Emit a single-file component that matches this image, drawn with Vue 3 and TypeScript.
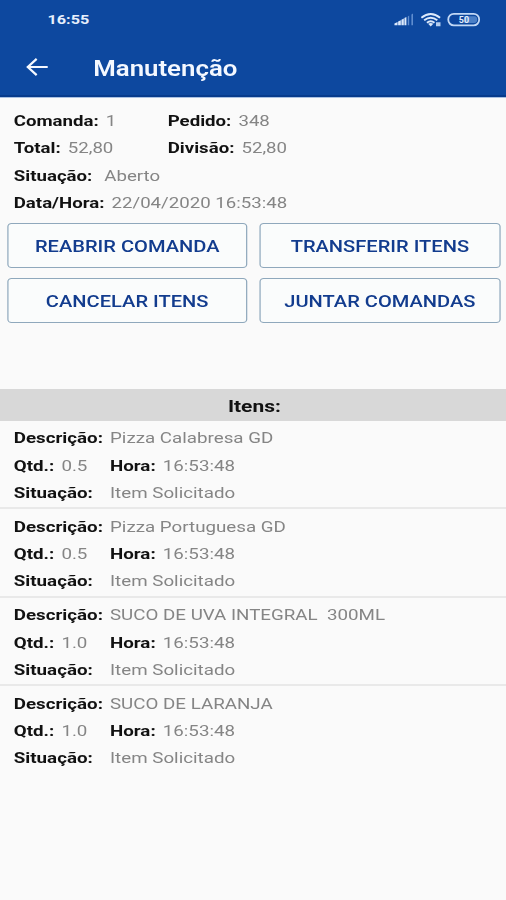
<script setup lang="ts">
interface Item {
  description: string
  quantity: string
  time: string
  status: string
}

const actions: string[] = ['REABRIR COMANDA', 'TRANSFERIR ITENS', 'CANCELAR ITENS', 'JUNTAR COMANDAS']

const items: Item[] = [
  { description: 'Pizza Calabresa GD', quantity: '0.5', time: '16:53:48', status: 'Item Solicitado' },
  { description: 'Pizza Portuguesa GD', quantity: '0.5', time: '16:53:48', status: 'Item Solicitado' },
  { description: 'SUCO DE UVA INTEGRAL  300ML', quantity: '1.0', time: '16:53:48', status: 'Item Solicitado' },
  { description: 'SUCO DE LARANJA', quantity: '1.0', time: '16:53:48', status: 'Item Solicitado' },
]
</script>

<template>
  <div class="viewport">
    <div class="screen">
      <header class="header">
        <div class="status-bar">
          <span class="clock">16:55</span>
          <svg class="status-icons" width="72" height="16" viewBox="0 0 88 16" preserveAspectRatio="none">
            <g fill="#dce9fb">
              <path d="M1 13.3V11.5L4.1 10.1V13.3Z" />
              <path d="M4.7 13.3V9.6L7.4 8.2V13.3Z" />
              <path d="M8 13.3V7.8L10.4 6.5V13.3Z" />
              <path d="M11 13.3V6L13 4.9V13.3Z" />
            </g>
            <path d="M14.4 13.3V4.4L15.8 3.5V13.3ZM18 13.3V2.5L19.6 1.5V13.3Z" fill="#5f8dcf" />
            <g fill="none" stroke="#dce9fb" stroke-width="1.9">
              <path d="M28 5.8Q37.4 -1.8 46.8 5.8" />
              <path d="M30.8 8.3Q37.4 3 44 8.3" />
              <path d="M33.6 10.7Q37.4 7.8 41.2 10.7" />
            </g>
            <path d="M34.8 11.8Q37.4 10 40 11.8L37.4 14.4Z" fill="#dce9fb" />
            <path d="M42.7 10.2H47.2V14.2H42.7Z" fill="#b5cdee" />
            <rect x="55" y="1.8" width="31" height="11.6" rx="5.6" fill="none" stroke="#c2d8f5" stroke-width="1.8" />
            <path d="M60 4.2H71V11H60Q57.2 11 57.2 7.6Q57.2 4.2 60 4.2Z" fill="#0d459d" />
            <path d="M71 4.2H81Q84 4.2 84 7.6Q84 11 81 11H71Z" fill="#4a7fc6" />
            <text x="70.8" y="11" text-anchor="middle" class="battery-level">50</text>
          </svg>
        </div>
        <div class="toolbar">
          <svg class="back" width="19" height="20" viewBox="0 0 23 20" preserveAspectRatio="none">
            <path d="M22 9H2.5M11 0.9L2.2 9L11 17.1" fill="none" stroke="#f4f8ff" stroke-width="2.2" />
          </svg>
          <h1 class="title">Manutenção</h1>
        </div>
      </header>

      <section class="summary">
        <div class="row">
          <p class="field half"><b>Comanda:</b><span>1</span></p>
          <p class="field"><b>Pedido:</b><span>348</span></p>
        </div>
        <div class="row">
          <p class="field half"><b>Total:</b><span>52,80</span></p>
          <p class="field"><b>Divisão:</b><span>52,80</span></p>
        </div>
        <div class="row">
          <p class="field wide"><b>Situação:</b><span>Aberto</span></p>
        </div>
        <div class="row">
          <p class="field"><b>Data/Hora:</b><span>22/04/2020 16:53:48</span></p>
        </div>
      </section>

      <div class="actions">
        <button v-for="action in actions" :key="action" class="action" type="button">{{ action }}</button>
      </div>

      <h2 class="list-title">Itens:</h2>
      <ul class="items">
        <li v-for="item in items" :key="item.description" class="item">
          <p class="field column"><b>Descrição:</b><span>{{ item.description }}</span></p>
          <div class="row">
            <p class="field quantity"><b>Qtd.:</b><span>{{ item.quantity }}</span></p>
            <p class="field"><b>Hora:</b><span>{{ item.time }}</span></p>
          </div>
          <p class="field column"><b>Situação:</b><span>{{ item.status }}</span></p>
        </li>
      </ul>
    </div>
  </div>
</template>

<style>
body {
  margin: 0;
  background: #fafafa;
}
</style>

<style scoped>
.viewport {
  width: 506px;
  height: 900px;
  overflow: hidden;
  background: #fafafa;
}
/* Wide glyph proportions: the layout is 415.4px wide and stretched to the viewport. */
.screen {
  width: 415.6px;
  height: 900px;
  transform: scaleX(1.2181);
  transform-origin: 0 0;
  font-family: Roboto, "Liberation Sans", sans-serif;
  font-size: 15.3px;
  color: #111;
}
.header {
  box-sizing: border-box;
  height: 98px;
  background: #0d489f;
  border-bottom: 1px solid #a9c1e2;
  box-shadow: inset 0 -2px 0 #073b8c;
}
.status-bar {
  display: flex;
  align-items: center;
  justify-content: space-between;
  height: 39px;
  padding: 0 21px 0 39px;
}
.clock {
  font-size: 13.3px;
  font-weight: 700;
  color: #e6effc;
}
.battery-level {
  font-size: 9px;
  font-weight: 700;
  fill: #e6effc;
}
.toolbar {
  display: flex;
  align-items: center;
  height: 58px;
  padding-left: 21px;
}
.title {
  margin: 0 0 0 36.5px;
  font-size: 21.2px;
  font-weight: 600;
  color: #f4f8ff;
}
.summary {
  padding: 10.2px 0 0 11.3px;
}
.row {
  display: flex;
}
.field {
  display: flex;
  gap: 5.8px;
  height: 27.2px;
  margin: 0;
  line-height: 27.2px;
  white-space: pre;
}
.field b {
  font-weight: 700;
}
.field span {
  color: #858585;
}
.half {
  width: 126.4px;
}
.wide {
  gap: 9.8px;
}
.actions {
  display: grid;
  grid-template-columns: 1fr 1fr;
  grid-auto-rows: 45px;
  gap: 10.5px 10px;
  padding: 5.9px 5px 0 5.7px;
}
.action {
  padding: 2px 0 0;
  border: 1px solid #8fa8bc;
  border-radius: 3.5px;
  background: #fafcfc;
  font-family: inherit;
  font-size: 16.5px;
  font-weight: 500;
  color: #123c8e;
}
.list-title {
  height: 31.5px;
  margin: 65.7px 0 0;
  padding-left: 2px;
  background: #d8d8d8;
  font-size: 17.2px;
  font-weight: 700;
  line-height: 34px;
  text-align: center;
}
.items {
  margin: 0;
  padding: 0;
  list-style: none;
  font-size: 15.4px;
}
.item {
  box-sizing: border-box;
  height: 88.5px;
  padding: 4.8px 0 0 11.3px;
  border-bottom: 2px solid #e9e9e9;
}
.item:last-child {
  border-bottom: 0;
}
.column {
  gap: 0;
}
.column b {
  width: 79px;
}
.quantity {
  width: 79px;
}
</style>
